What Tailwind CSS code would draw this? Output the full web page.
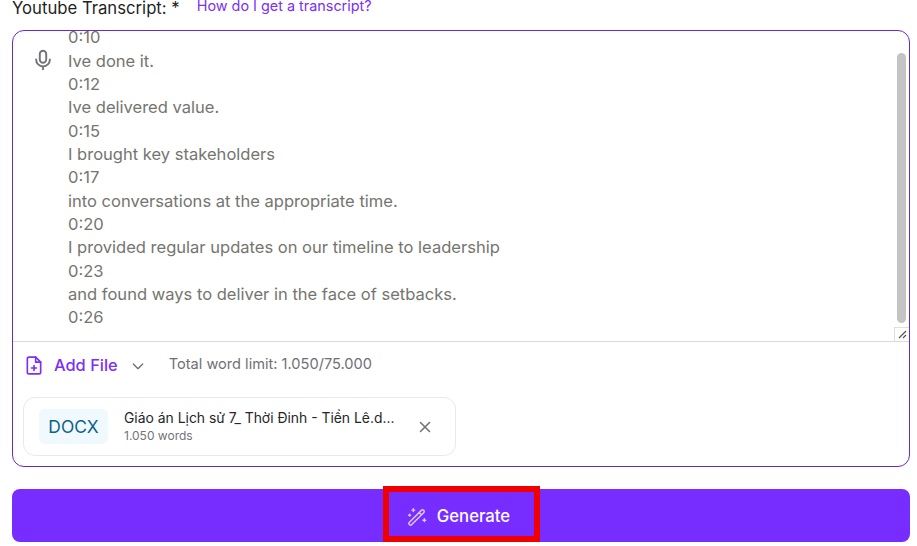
<!DOCTYPE html>
<html lang="en">
<head>
  <meta charset="UTF-8" />
  <title>Youtube Transcript</title>
  <script src="https://cdn.jsdelivr.net/npm/@tailwindcss/browser@4"></script>
</head>
<body class="bg-white font-['Inter',sans-serif] overflow-hidden">
  <div class="w-[917px] h-[546px] pl-3 pr-[7px] relative">
    <!-- Label row -->
    <div class="flex items-start h-[16px] gap-[17px] mb-[14px]">
      <span class="text-[16.7px] leading-[16px] text-[#1f1f1f]">Youtube Transcript: *</span>
      <a href="#" class="text-[14.4px] leading-[12px] text-[#7b2ff7]">How do I get a transcript?</a>
    </div>

    <!-- Input box -->
    <div class="h-[437px] border border-[#6d28c9] rounded-[12px] flex flex-col overflow-hidden">
      <div class="h-[311px] flex relative border-b border-[#d9d9de]">
        <div class="w-[55px] shrink-0 flex justify-center pt-[18px] pl-[5px]">
          <svg class="w-[22px] h-[22px] text-[#73737a]" fill="none" viewBox="0 0 24 24" stroke="currentColor" stroke-width="2.1" stroke-linecap="round" stroke-linejoin="round">
            <rect x="8.5" y="2" width="7" height="13" rx="3.5" />
            <path d="M4.5 11.5a7.5 7.5 0 0 0 15 0M12 19v3" />
          </svg>
        </div>
        <div class="flex-1 overflow-hidden text-[16.55px] leading-[23.33px] text-[#75756f] -mt-[4.7px]">
          <p>0:10</p>
          <p>Ive done it.</p>
          <p>0:12</p>
          <p>Ive delivered value.</p>
          <p>0:15</p>
          <p>I brought key stakeholders</p>
          <p>0:17</p>
          <p>into conversations at the appropriate time.</p>
          <p>0:20</p>
          <p>I provided regular updates on our timeline to leadership</p>
          <p>0:23</p>
          <p>and found ways to deliver in the face of setbacks.</p>
          <p>0:26</p>
        </div>
        <!-- scrollbar and resize grip -->
        <div class="absolute right-[3px] top-[22px] w-[9px] h-[270px] rounded-full bg-[#c4c4c4]"></div>
        <div class="absolute right-0 bottom-0 w-[15px] h-[14px] border-l border-t border-[#dedede] bg-white flex items-center justify-center">
          <svg class="w-[9px] h-[9px] text-[#555]" viewBox="0 0 9 9" fill="none" stroke="currentColor" stroke-width="1.2">
            <path d="M1 8 8 1M5 8l3-3" />
          </svg>
        </div>
      </div>

      <!-- Add file row -->
      <div class="h-[45px] flex items-center pl-[11px] pt-[2px]">
        <svg class="w-[20px] h-[21px] text-[#7b2ff7]" fill="none" viewBox="0 0 24 24" stroke="currentColor" stroke-width="2" stroke-linecap="round" stroke-linejoin="round">
          <path d="M14 2H6a2 2 0 0 0-2 2v16a2 2 0 0 0 2 2h12a2 2 0 0 0 2-2V8z" />
          <path d="M14 2v6h6M12 12v6M9 15h6" />
        </svg>
        <span class="ml-[10px] text-[16.4px] font-medium text-[#7b2ff7]">Add File</span>
        <svg class="ml-[12px] w-[16px] h-[16px] text-[#6f6f76]" fill="none" viewBox="0 0 24 24" stroke="currentColor" stroke-width="2" stroke-linecap="round" stroke-linejoin="round">
          <path d="m5 9 7 7 7-7" />
        </svg>
        <span class="ml-[23px] text-[14.6px] text-[#6f6f76] -mt-[2px]">Total word limit: 1.050/75.000</span>
      </div>

      <!-- Attached file -->
      <div class="pl-[10px] pt-[10px]">
        <div class="w-[433px] h-[59px] border border-[#e8e8ee] rounded-[12px] flex items-center pl-[15px]">
          <div class="w-[69px] h-[35px] pt-[2px] rounded-[5px] bg-[#f0f9fe] flex items-center justify-center text-[17.4px] text-[#0f5f86]">DOCX</div>
          <div class="ml-[16px] w-[270px]">
            <p class="text-[13.9px] leading-[18px] text-[#26262b] whitespace-nowrap">Giáo án Lịch sử 7_ Thời Đinh - Tiền Lê.d...</p>
            <p class="text-[12px] leading-[18px] text-[#73737a]">1.050 words</p>
          </div>
          <svg class="ml-[22px] w-[18px] h-[18px] text-[#6f6f76]" fill="none" viewBox="0 0 24 24" stroke="currentColor" stroke-width="2" stroke-linecap="round">
            <path d="M6 6l12 12M18 6 6 18" />
          </svg>
        </div>
      </div>
    </div>

    <!-- Generate button -->
    <button class="mt-[22px] w-full h-[53px] pt-[2px] pr-[6px] rounded-[8px] bg-[#772dff] flex items-center justify-center gap-[9px] text-white text-[16.7px] font-medium">
      <svg class="w-[22px] h-[22px] text-[#dcc8fd]" fill="none" viewBox="0 0 24 24" stroke="currentColor" stroke-width="1.6" stroke-linecap="round" stroke-linejoin="round">
        <path d="M3.5 18 17 4.5a1.4 1.4 0 0 1 2 0l.5.5a1.4 1.4 0 0 1 0 2L6 20.5a1.4 1.4 0 0 1-2 0l-.5-.5a1.4 1.4 0 0 1 0-2zM14.5 7l2.5 2.5" />
        <path d="M8 3v3M6.5 4.5h3M20 14v3M18.5 15.5h3M4 9v2M3 10h2" />
      </svg>
      Generate
    </button>

    <!-- Red highlight annotation -->
    <div class="absolute left-[383px] top-[486px] w-[157px] h-[56px] border-[6px] border-[#f00000]"></div>
  </div>
</body>
</html>
